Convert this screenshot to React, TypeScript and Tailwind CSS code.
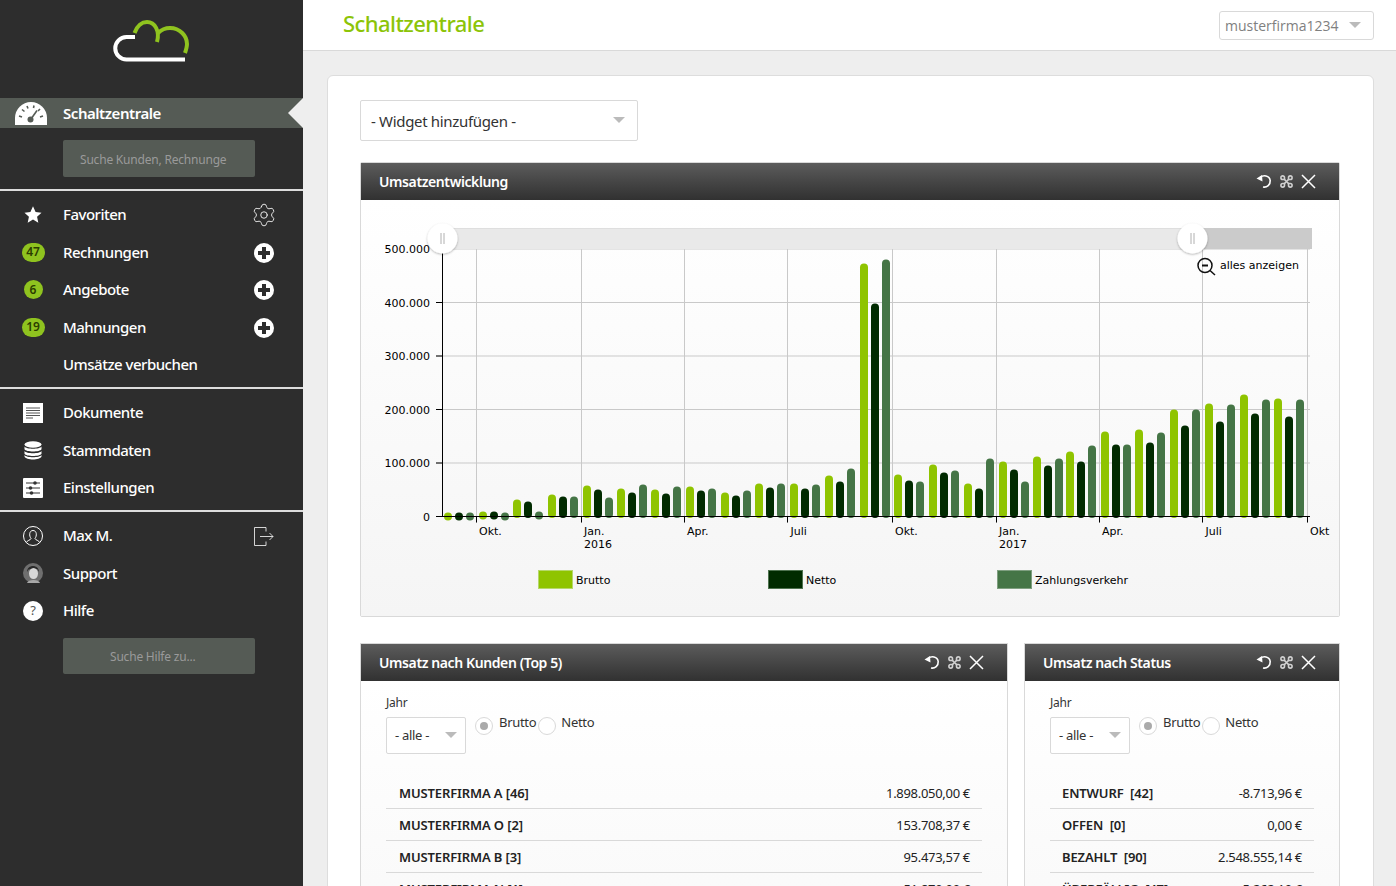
import { Settings } from 'lucide-react';

const BRUTTO = '#8fc400';
const NETTO = '#012b00';
const ZAHLUNG = '#457546';

// heights in px above the x axis: brutto, netto, zahlungsverkehr
const groups: [number, number, number][] = [
  [4, 4, 4], [5, 5, 4], [17, 15, 5], [22, 20, 20], [31, 27, 19], [28, 24, 32], [27, 23, 30],
  [30, 26, 28], [24, 21, 26], [33, 29, 33], [33, 28, 32], [41, 35, 48], [253, 213, 257],
  [42, 36, 35], [52, 44, 46], [33, 28, 58], [55, 47, 35], [60, 51, 58], [65, 55, 71],
  [85, 72, 72], [87, 74, 84], [107, 91, 107], [113, 95, 112], [122, 103, 117], [118, 100, 117],
];
const groupX = [448, 483, 517, 552, 587, 621, 655, 690, 725, 759, 794, 829, 864, 898, 933, 968, 1003, 1037, 1070, 1105, 1139, 1174, 1209, 1244, 1278];
const gridX = [476, 581, 684, 787, 892, 996, 1099, 1202, 1307];
const gridY = [249, 302.5, 356, 409.5, 463];

function Logo() {
  return (
    <svg width="80" height="46" viewBox="110 18 80 46" fill="none" strokeWidth="4">
      <path d="M135 37 H126.5 A11.25 11.25 0 0 0 126.5 59.5 H185" stroke="#ffffff" />
      <path d="M134.5 33 C137 26 142 22 147 22 C155 22 160 31 157 42" stroke="#8fc31f" />
      <path d="M158 33 C162 29 166 28 170 28 C180 28 187 36 187 44 C187 47 186 50 185 53" stroke="#8fc31f" />
    </svg>
  );
}

function Gauge() {
  return (
    <svg width="34" height="24" viewBox="0 0 34 24">
      <path d="M1 24 V17 A16 16 0 0 1 33 17 V24 Z" fill="#ffffff" />
      <path d="M5 15 L8 16 M8 8.5 L10.5 10.5 M13 5 L14 7.5 M20 4.5 L19.5 7 M26 8 L24 10 M29 15 L26 16" stroke="#555b55" strokeWidth="1.6" />
      <path d="M17 18 L23 9.5" stroke="#555b55" strokeWidth="1.6" />
      <circle cx="16.5" cy="18.5" r="3" fill="#555b55" />
    </svg>
  );
}

function Star() {
  return (
    <svg width="18" height="17" viewBox="0 0 24 23" fill="#ffffff">
      <path d="M12 0.5 L15.5 8 L23.5 9 L17.5 14.5 L19.2 22.5 L12 18.4 L4.8 22.5 L6.5 14.5 L0.5 9 L8.5 8 Z" />
    </svg>
  );
}

function PlusCircle() {
  return (
    <svg width="20" height="20" viewBox="0 0 20 20">
      <circle cx="10" cy="10" r="10" fill="#ffffff" />
      <path d="M10 4 V16 M4 10 H16" stroke="#2d2d2d" strokeWidth="4" />
    </svg>
  );
}

function DocIcon() {
  return (
    <svg width="20" height="20" viewBox="0 0 20 20">
      <rect width="20" height="20" fill="#ffffff" />
      <path d="M3 5 H17 M3 7.5 H17 M3 10 H17 M3 12.5 H17 M3 15 H10" stroke="#555555" strokeWidth="1" />
    </svg>
  );
}

function DbIcon() {
  return (
    <svg width="18" height="19" viewBox="0 0 18 19" fill="#ffffff">
      <ellipse cx="9" cy="3.5" rx="8.5" ry="3.2" />
      <path d="M0.5 5.5 C2 8.5 16 8.5 17.5 5.5 V8.3 C16 11.3 2 11.3 0.5 8.3 Z" />
      <path d="M0.5 10 C2 13 16 13 17.5 10 V12.8 C16 15.8 2 15.8 0.5 12.8 Z" />
      <path d="M0.5 14 C2 17 16 17 17.5 14 V15.5 C16 19.5 2 19.5 0.5 15.5 Z" />
    </svg>
  );
}

function SlidersIcon() {
  return (
    <svg width="20" height="20" viewBox="0 0 20 20">
      <rect width="20" height="20" rx="1" fill="#ffffff" />
      <path d="M3 5 H17 M3 10 H17 M3 15 H17" stroke="#333333" strokeWidth="1" />
      <circle cx="12" cy="5" r="1.8" fill="#333333" />
      <circle cx="7.5" cy="10" r="1.8" fill="#333333" />
      <circle cx="8.5" cy="15" r="1.8" fill="#333333" />
    </svg>
  );
}

function UserIcon() {
  return (
    <svg width="20" height="20" viewBox="0 0 20 20" fill="none" stroke="#ffffff" strokeWidth="1">
      <circle cx="10" cy="10" r="9.5" />
      <path d="M3.5 16.5 C4 14 7.5 14.5 8 12.5 C6 10 6 4.5 10 4.5 C14 4.5 14 10 12 12.5 C12.5 14.5 16 14 16.5 16.5" />
    </svg>
  );
}

function LogoutIcon() {
  return (
    <svg width="20" height="19" viewBox="0 0 20 19" fill="none" stroke="#ffffff" strokeWidth="0.8">
      <path d="M12 4.5 V0.5 H0.5 V18.5 H12 V14.5" />
      <path d="M6 9.5 H19 M15.5 6 L19 9.5 L15.5 13" />
    </svg>
  );
}

function Avatar() {
  return (
    <svg width="20" height="20" viewBox="0 0 20 20">
      <circle cx="10" cy="10" r="10" fill="#6f6f6f" />
      <path d="M4 9 C4 1 16 1 16 9 L14.5 6.5 H5.5 Z" fill="#2a2a2a" />
      <ellipse cx="10.5" cy="10.5" rx="4.5" ry="5.5" fill="#d8d8d8" />
      <path d="M4 20 C5 16 16 16 17 20 Z" fill="#a8a8a8" />
    </svg>
  );
}

function HeaderIcons() {
  return (
    <div className="flex items-center gap-[8px] text-white">
      <svg width="16" height="15" viewBox="0 0 16 15" fill="none" stroke="#ffffff" strokeWidth="1.6">
        <path d="M4.5 3.5 C7 0.8 13.5 1 14.2 6.5 C14.5 10.5 11 13.8 7 13" />
        <path d="M0.5 4.5 L6 1 L6.5 7.5 Z" fill="#ffffff" stroke="none" />
      </svg>
      <svg width="13" height="13" viewBox="0 0 13 13" fill="none" stroke="#d0d0d0" strokeWidth="1.6">
        <path d="M4.5 4.5 L8.5 8.5 M8.5 4.5 L4.5 8.5" />
        <path d="M4.5 4.5 H2.7 A1.8 1.8 0 1 1 4.5 2.7 Z M8.5 4.5 V2.7 A1.8 1.8 0 1 1 10.3 4.5 Z M8.5 8.5 H10.3 A1.8 1.8 0 1 1 8.5 10.3 Z M4.5 8.5 V10.3 A1.8 1.8 0 1 1 2.7 8.5 Z" />
      </svg>
      <svg width="15" height="15" viewBox="0 0 15 15" stroke="#ffffff" strokeWidth="1.5">
        <path d="M1 1 L14 14 M14 1 L1 14" />
      </svg>
    </div>
  );
}

function Caret({ className }: { className: string }) {
  return <span className={`border-x-[6px] border-t-[6px] border-x-transparent ${className}`} />;
}

function NavRow({ icon, label, right }: { icon: React.ReactNode; label: string; right?: React.ReactNode }) {
  return (
    <div className="flex h-[37.5px] items-center text-white">
      <div className="flex w-[63px] shrink-0 justify-center pl-[3px]">{icon}</div>
      <span className="flex-1 pb-[1px] text-[15px] font-medium tracking-[-0.5px]">{label}</span>
      <div className="mr-[29px] mt-[1px] flex w-[20px] justify-center">{right}</div>
    </div>
  );
}

function Badge({ value, wide }: { value: string; wide?: boolean }) {
  return (
    <span className={`flex h-[19px] items-center justify-center rounded-full bg-[#8fc31f] text-[12px] font-semibold text-[#2b3d00] ${wide ? 'w-[23px]' : 'w-[19px]'}`}>
      {value}
    </span>
  );
}

function Sidebar() {
  return (
    <aside className="w-[303px] shrink-0 bg-[#2d2d2d]">
      <div className="flex h-[98px] justify-center pt-[18px] pr-[3px]">
        <div className="h-[46px]"><Logo /></div>
      </div>
      <div className="relative flex h-[30px] items-center bg-[#555b55] text-white">
        <div className="flex w-[63px] justify-center pr-[1px]"><Gauge /></div>
        <span className="text-[15px] font-semibold tracking-[-0.45px]">Schaltzentrale</span>
        <span className="absolute right-0 top-0 border-y-[15px] border-r-[15px] border-y-transparent border-r-[#eeeeee]" />
      </div>
      <div className="ml-[63px] mt-[12px] flex h-[37px] w-[192px] items-center rounded-[2px] bg-[#555b55] pl-[17px] pt-[2px] text-[12px] tracking-[-0.2px] text-[#9a9a9a]">
        Suche Kunden, Rechnunge
      </div>
      <div className="mt-[12px] h-[2px] bg-[#dddddd]" />
      <div className="pt-[5px]">
        <NavRow icon={<Star />} label="Favoriten" right={<Settings size={26} strokeWidth={0.8} className="shrink-0 text-white" />} />
        <NavRow icon={<Badge value="47" wide />} label="Rechnungen" right={<PlusCircle />} />
        <NavRow icon={<Badge value="6" />} label="Angebote" right={<PlusCircle />} />
        <NavRow icon={<Badge value="19" wide />} label="Mahnungen" right={<PlusCircle />} />
        <NavRow icon={null} label="Umsätze verbuchen" />
      </div>
      <div className="mt-[3.5px] h-[2px] bg-[#dddddd]" />
      <div className="pt-[5px]">
        <NavRow icon={<DocIcon />} label="Dokumente" />
        <NavRow icon={<DbIcon />} label="Stammdaten" />
        <NavRow icon={<SlidersIcon />} label="Einstellungen" />
      </div>
      <div className="mt-[3.5px] h-[2px] bg-[#dddddd]" />
      <div className="pt-[5px]">
        <NavRow icon={<UserIcon />} label="Max M." right={<LogoutIcon />} />
        <NavRow icon={<Avatar />} label="Support" />
        <NavRow
          icon={<span className="flex h-[20px] w-[20px] items-center justify-center rounded-full bg-white text-[13px] text-[#555555]">?</span>}
          label="Hilfe"
        />
      </div>
      <div className="ml-[63px] mt-[8px] flex h-[36px] w-[192px] items-center rounded-[2px] bg-[#555b55] pl-[47px] pt-[2px] text-[12px] tracking-[-0.2px] text-[#9a9a9a]">
        Suche Hilfe zu...
      </div>
    </aside>
  );
}

function Chart() {
  // svg origin is the widget body's top left corner (361, 200)
  const ox = 361;
  const oy = 200;
  const base = 516.5 - oy;
  const tick = 'DejaVu Sans, Verdana, sans-serif';
  return (
    <svg width="978" height="416" viewBox="0 0 978 416" className="block">
      <defs>
        <filter id="handleShadow" x="-30%" y="-30%" width="160%" height="160%">
          <feDropShadow dx="0" dy="1" stdDeviation="1.2" floodColor="#000000" floodOpacity="0.3" />
        </filter>
      </defs>
      {gridY.map((y) => (
        <line key={y} x1={442 - ox - 6} x2={1310 - ox} y1={y - oy} y2={y - oy} stroke="#c9c9c9" />
      ))}
      {gridX.map((x) => (
        <line key={x} x1={x + 0.5 - ox} x2={x + 0.5 - ox} y1={249 - oy} y2={base + 6} stroke="#c9c9c9" />
      ))}
      {groups.map((g, i) =>
        g.map((h, j) => {
          const cx = groupX[i] + j * 11 - ox;
          const color = [BRUTTO, NETTO, ZAHLUNG][j];
          const top = base - h;
          const height = Math.max(h + 1.5, 8);
          return <rect key={`${i}-${j}`} x={cx - 4} y={top} width={8} height={height} rx={4} fill={color} />;
        }),
      )}
      <line x1={442.5 - ox} x2={442.5 - ox} y1={249 - oy} y2={base + 0.5} stroke="#000000" />
      <line x1={436 - ox} x2={1310 - ox} y1={base} y2={base} stroke="#000000" />
      {[302.5, 356, 409.5, 463].map((y) => (
        <line key={y} x1={436 - ox} x2={442 - ox} y1={y - oy} y2={y - oy} stroke="#000000" />
      ))}
      {gridX.map((x) => (
        <line key={x} x1={x + 0.5 - ox} x2={x + 0.5 - ox} y1={base} y2={base + 6} stroke="#000000" />
      ))}
      <g fontFamily={tick} fontSize="11" fill="#000000">
        {['500.000', '400.000', '300.000', '200.000', '100.000', '0'].map((t, i) => (
          <text key={t} x={430 - ox} y={253 + i * 53.5 - oy} textAnchor="end">{t}</text>
        ))}
        <text x={479 - ox} y={535 - oy}>Okt.</text>
        <text x={584 - ox} y={535 - oy}>Jan.</text>
        <text x={584 - ox} y={548 - oy}>2016</text>
        <text x={687 - ox} y={535 - oy}>Apr.</text>
        <text x={790.5 - ox} y={535 - oy}>Juli</text>
        <text x={895 - ox} y={535 - oy}>Okt.</text>
        <text x={999 - ox} y={535 - oy}>Jan.</text>
        <text x={999 - ox} y={548 - oy}>2017</text>
        <text x={1102 - ox} y={535 - oy}>Apr.</text>
        <text x={1205.5 - ox} y={535 - oy}>Juli</text>
        <text x={1310 - ox} y={535 - oy}>Okt</text>
        <text x={1220 - ox} y={269 - oy}>alles anzeigen</text>
        <text x={576 - ox} y={584 - oy}>Brutto</text>
        <text x={806 - ox} y={584 - oy}>Netto</text>
        <text x={1035 - ox} y={584 - oy}>Zahlungsverkehr</text>
      </g>
      <rect x={538.5 - ox} y={570.5 - oy} width={34} height={18} fill={BRUTTO} stroke="#b5d86a" />
      <rect x={768.5 - ox} y={570.5 - oy} width={34} height={18} fill={NETTO} stroke="#4f7350" />
      <rect x={997.5 - ox} y={570.5 - oy} width={34} height={18} fill={ZAHLUNG} stroke="#7f9f80" />
      {/* range slider */}
      <rect x={443 - ox} y={228 - oy} width={750} height={21} fill="#e9e9e9" />
      <line x1={443 - ox} x2={1193 - ox} y1={228.5 - oy} y2={228.5 - oy} stroke="#dedede" />
      <rect x={1193 - ox} y={228 - oy} width={119} height={21} fill="#cbcbcb" />
      {[442.5, 1192.5].map((x) => (
        <g key={x}>
          <circle cx={x - ox} cy={238.5 - oy} r={15} fill="#ffffff" filter="url(#handleShadow)" />
          <path d={`M${x - ox - 1.5} ${233 - oy} V${244 - oy} M${x - ox + 1.5} ${233 - oy} V${244 - oy}`} stroke="#b0b0b0" />
        </g>
      ))}
      <g fill="none" stroke="#111111" strokeWidth="1.5">
        <circle cx={1205 - ox} cy={265.5 - oy} r={7} />
        <path d={`M${1210 - ox} ${270.5 - oy} L${1215 - ox} ${275 - oy}`} />
        <path d={`M${1202 - ox} ${265.5 - oy} H${1208 - ox}`} strokeWidth="2" />
      </g>
    </svg>
  );
}

function WidgetHeader({ title, iconsMr }: { title: string; iconsMr: string }) {
  return (
    <div className="flex h-[37px] items-center justify-between bg-gradient-to-b from-[#5c5c5c] to-[#313131] pl-[18px] text-white">
      <span className="text-[14px] font-semibold tracking-[-0.4px]">{title}</span>
      <div className={iconsMr}><HeaderIcons /></div>
    </div>
  );
}

function Filters() {
  return (
    <div>
      <div className="text-[12px] leading-[16px] tracking-[-0.2px] text-[#333333]">Jahr</div>
      <div className="mt-[6px] flex items-start text-[13px] tracking-[-0.3px] text-[#333333]">
        <div className="flex h-[37px] w-[80px] items-center justify-between rounded-[2px] border border-[#d9d9d9] bg-white pl-[8px] pr-[8px]">
          <span>- alle -</span>
          <Caret className="-mt-[2px] border-t-[#bbbbbb]" />
        </div>
        <span className="ml-[9px] flex h-[18px] w-[18px] items-center justify-center rounded-full border border-[#d9d9d9] bg-white">
          <span className="h-[8px] w-[8px] rounded-full bg-[#aaaaaa]" />
        </span>
        <span className="ml-[6px] leading-[11px]">Brutto</span>
        <span className="ml-[2px] h-[18px] w-[18px] rounded-full border border-[#d9d9d9] bg-white" />
        <span className="ml-[5px] leading-[11px]">Netto</span>
      </div>
    </div>
  );
}

function DataRows({ rows, pad }: { rows: [string, string][]; pad: string }) {
  return (
    <div className="mt-[23px]">
      {rows.map(([name, value]) => (
        <div key={name} className={`flex h-[32px] items-center justify-between border-b border-[#d9d9d9] pt-[2px] text-[13px] tracking-[-0.3px] text-[#222222] ${pad}`}>
          <span className="font-semibold tracking-[-0.12px] whitespace-pre">{name}</span>
          <span>{value}</span>
        </div>
      ))}
    </div>
  );
}

const customers: [string, string][] = [
  ['MUSTERFIRMA A [46]', '1.898.050,00 €'],
  ['MUSTERFIRMA O [2]', '153.708,37 €'],
  ['MUSTERFIRMA B [3]', '95.473,57 €'],
  ['MUSTERFIRMA N [1]', '51.870,00 €'],
];

const states: [string, string][] = [
  ['ENTWURF  [42]', '-8.713,96 €'],
  ['OFFEN  [0]', '0,00 €'],
  ['BEZAHLT  [90]', '2.548.555,14 €'],
  ['ÜBERFÄLLIG  [47]', '5.262,10 €'],
];

export default function App() {
  return (
    <div className="flex h-[886px] w-[1396px] overflow-hidden bg-[#eeeeee] font-['Noto_Sans',sans-serif]">
      <Sidebar />
      <main className="flex min-w-0 flex-1 flex-col">
        <header className="flex h-[51px] shrink-0 items-center justify-between border-b border-[#d9d9d9] bg-white pl-[40px] pr-[22px]">
          <h1 className="pb-[4px] text-[22px] font-medium tracking-[-0.55px] text-[#8cc408]">Schaltzentrale</h1>
          <div className="flex h-[29px] w-[155px] items-center justify-between rounded-[3px] border border-[#d9d9d9] pl-[5px] pr-[12px] font-['Open_Sans',sans-serif] text-[14px] text-[#808080]">
            <span>musterfirma1234</span>
            <Caret className="border-t-[#bbbbbb]" />
          </div>
        </header>
        <div className="ml-[24px] mr-[22px] mt-[24px] flex-1 rounded-t-[6px] border border-[#dddddd] bg-white px-[32px] pt-[24px]">
          <div className="flex h-[41px] w-[278px] items-center justify-between rounded-[2px] border border-[#d9d9d9] bg-white pl-[10px] pr-[12px] pt-[1px] text-[15px] tracking-[-0.33px] text-[#333333]">
            <span>- Widget hinzufügen -</span>
            <Caret className="-mt-[2px] border-t-[#bbbbbb]" />
          </div>
          <section className="mt-[21px] w-[980px] rounded-[2px] border border-[#d9d9d9]">
            <WidgetHeader title="Umsatzentwicklung" iconsMr="mr-[23px]" />
            <div className="bg-gradient-to-b from-white to-[#f5f5f5]"><Chart /></div>
          </section>
          <div className="mt-[26px] flex w-[980px] justify-between">
            <section className="w-[648px] border border-[#d9d9d9]">
              <WidgetHeader title="Umsatz nach Kunden (Top 5)" iconsMr="mr-[23px]" />
              <div className="h-[400px] bg-gradient-to-b from-white to-[#f5f5f5] px-[25px] pt-[14px]">
                <Filters />
                <DataRows rows={customers} pad="pl-[13px] pr-[12px]" />
              </div>
            </section>
            <section className="w-[316px] border border-[#d9d9d9]">
              <WidgetHeader title="Umsatz nach Status" iconsMr="mr-[23px]" />
              <div className="h-[400px] bg-gradient-to-b from-white to-[#f5f5f5] px-[25px] pt-[14px]">
                <Filters />
                <DataRows rows={states} pad="px-[12px]" />
              </div>
            </section>
          </div>
        </div>
      </main>
    </div>
  );
}
